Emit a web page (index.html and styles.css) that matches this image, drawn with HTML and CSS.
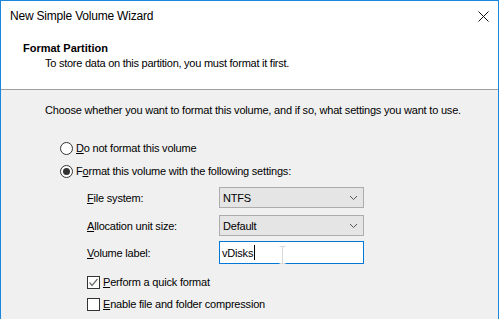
FILE: index.html
```html
<!DOCTYPE html>
<html>
<head>
<meta charset="utf-8">
<link rel="stylesheet" href="styles.css">
</head>
<body>
<div class="window">
  <div class="titlebar">
    <span class="title">New Simple Volume Wizard</span>
    <svg class="close" width="11" height="11" viewBox="0 0 11 11"><path d="M0.5 0.5 L10.5 10.5 M10.5 0.5 L0.5 10.5" stroke="#111" stroke-width="1" fill="none"/></svg>
  </div>
  <div class="header">
    <div class="h-title">Format Partition</div>
    <div class="h-sub">To store data on this partition, you must format it first.</div>
  </div>
  <div class="content">
    <p class="intro">Choose whether you want to format this volume, and if so, what settings you want to use.</p>
    <div class="radio-row r1"><span class="radio"></span><span class="lbl"><u>D</u>o not format this volume</span></div>
    <div class="radio-row r2"><span class="radio checked"></span><span class="lbl">F<u>o</u>rmat this volume with the following settings:</span></div>
    <div class="settings">
      <div class="field f1">
        <span class="flabel"><u>F</u>ile system:</span>
        <div class="combo"><span>NTFS</span><svg class="chev" width="9" height="6" viewBox="0 0 9 6"><polyline points="1,1 4.5,4.5 8,1" fill="none" stroke="#555" stroke-width="1"/></svg></div>
      </div>
      <div class="field f2">
        <span class="flabel"><u>A</u>llocation unit size:</span>
        <div class="combo"><span>Default</span><svg class="chev" width="9" height="6" viewBox="0 0 9 6"><polyline points="1,1 4.5,4.5 8,1" fill="none" stroke="#555" stroke-width="1"/></svg></div>
      </div>
      <div class="field f3">
        <span class="flabel"><u>V</u>olume label:</span>
        <div class="textbox"><span>vDisks</span><span class="caret"></span>
          <svg class="ibeam" width="7" height="18" viewBox="0 0 7 18"><path d="M0.5 0.5 H6.5 M3.5 0.5 V17.5 M0.5 17.5 H6.5" stroke="#d8d8d8" stroke-width="1" fill="none"/></svg>
        </div>
      </div>
      <div class="check-row c1">
        <span class="checkbox"><svg width="11" height="11" viewBox="0 0 11 11"><polyline points="1.5,5.5 4,8.5 9.5,2" fill="none" stroke="#6e6e6e" stroke-width="1.2"/></svg></span>
        <span class="lbl"><u>P</u>erform a quick format</span>
      </div>
      <div class="check-row c2">
        <span class="checkbox"></span>
        <span class="lbl"><u>E</u>nable file and folder compression</span>
      </div>
    </div>
  </div>
</div>
</body>
</html>
```
FILE: styles.css
```css
html, body {
  margin: 0;
  padding: 0;
  background: #f0f0f0;
}
body {
  font-family: "Liberation Sans", Arial, sans-serif;
  font-size: 12px;
  color: #000;
}
.window {
  width: 497px;
  height: 318px;
  border: 1px solid #1a87dc;
  border-bottom: none;
  background: #f0f0f0;
  overflow: hidden;
}
.titlebar {
  height: 29px;
  background: #fff;
  display: flex;
  align-items: center;
  justify-content: space-between;
  padding: 0 9px 0 9px;
}
.title {
  font-size: 12px;
  line-height: 16px;
  letter-spacing: -0.2px;
  color: #000;
}
.close {
  display: block;
  margin-top: 1px;
}
.header {
  height: 47px;
  background: #fff;
  border-bottom: 1px solid #a0a0a0;
  padding: 12px 0 0 22px;
}
.h-title {
  font-weight: bold;
  font-size: 11px;
  line-height: 13px;
}
.h-sub {
  font-size: 11px;
  line-height: 14px;
  letter-spacing: -0.25px;
  margin: 1px 0 0 22px;
}
.content {
  padding: 12px 0 0 44px;
  font-size: 11px;
  letter-spacing: -0.2px;
}
.intro {
  margin: 0;
  line-height: 16px;
  white-space: nowrap;
}
.radio-row, .check-row {
  display: flex;
  align-items: center;
  height: 16px;
  line-height: 16px;
}
.radio-row { margin-left: 15px; }
.r1 { margin-top: 22px; }
.r2 { margin-top: 7px; }
.radio {
  box-sizing: border-box;
  width: 13px;
  height: 13px;
  border: 1px solid #333;
  border-radius: 50%;
  background: #fff;
  margin-right: 3px;
  display: flex;
  align-items: center;
  justify-content: center;
}
.radio.checked::after {
  content: "";
  width: 7px;
  height: 7px;
  border-radius: 50%;
  background: #333;
}
u {
  text-decoration: underline;
  text-underline-offset: 1px;
}
.settings {
  margin-left: 42px;
}
.field {
  display: flex;
  align-items: center;
}
.f1 { margin-top: 8px; }
.f2 { margin-top: 7px; }
.f3 { margin-top: 5px; }
.flabel {
  width: 132px;
}
.combo {
  box-sizing: border-box;
  width: 145px;
  height: 21px;
  background: #e5e5e5;
  border: 1px solid #adadad;
  display: flex;
  align-items: center;
  justify-content: space-between;
  padding: 0 5px 0 3px;
}
.chev { display: block; margin-top: 1px; }
.textbox {
  position: relative;
  box-sizing: border-box;
  width: 145px;
  height: 23px;
  background: #fff;
  border: 1px solid #0078d7;
  display: flex;
  align-items: center;
  padding-left: 2px;
}
.caret {
  width: 1px;
  height: 15px;
  background: #000;
  margin-left: 1px;
}
.ibeam {
  position: absolute;
  left: 59px;
  top: 4px;
}
.c1 { margin-top: 10px; }
.c2 { margin-top: 6px; }
.checkbox {
  box-sizing: border-box;
  width: 13px;
  height: 13px;
  border: 1px solid #333;
  background: #fff;
  margin-right: 3px;
  display: flex;
  align-items: center;
  justify-content: center;
}
.checkbox svg { display: block; }
```
